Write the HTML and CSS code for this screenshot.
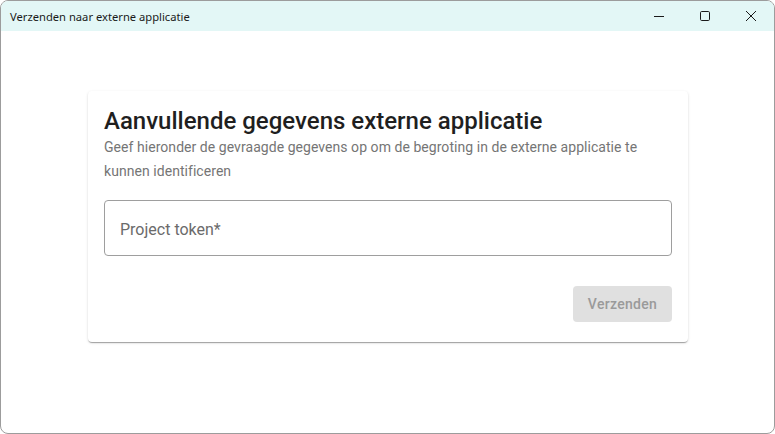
FILE: index.html
```html
<!DOCTYPE html>
<html lang="nl">
<head>
<meta charset="utf-8">
<title>Verzenden naar externe applicatie</title>
<link rel="stylesheet" href="styles.css">
</head>
<body>
<div class="window">
  <div class="titlebar">
    <span class="title">Verzenden naar externe applicatie</span>
    <div class="controls">
      <span class="ctrl"><svg width="10" height="10" viewBox="0 0 10 10"><path d="M0 5.5h10" stroke="#1a1a1a" stroke-width="1"/></svg></span>
      <span class="ctrl"><svg width="10" height="10" viewBox="0 0 10 10"><rect x="0.5" y="0.5" width="9" height="9" rx="1.2" fill="none" stroke="#1a1a1a" stroke-width="1"/></svg></span>
      <span class="ctrl"><svg width="10" height="10" viewBox="0 0 10 10"><path d="M0 0L10 10M10 0L0 10" stroke="#1a1a1a" stroke-width="1"/></svg></span>
    </div>
  </div>
  <div class="content">
    <div class="card">
      <h1 class="card-title">Aanvullende gegevens externe applicatie</h1>
      <p class="card-sub">Geef hieronder de gevraagde gegevens op om de begroting in de externe applicatie te kunnen identificeren</p>
      <div class="field">
        <span class="placeholder">Project token*</span>
      </div>
      <div class="actions">
        <button class="btn" disabled>Verzenden</button>
      </div>
    </div>
  </div>
</div>
</body>
</html>
```
FILE: styles.css
```css
* { box-sizing: border-box; }
html, body { margin: 0; padding: 0; background: #ffffff; }
body { width: 775px; height: 434px; overflow: hidden; }
.window {
  width: 775px;
  height: 434px;
  border: 1px solid #9c9c9c;
  border-radius: 8px;
  overflow: hidden;
  background: #ffffff;
  display: flex;
  flex-direction: column;
}
.titlebar {
  height: 30px;
  background: #e3f7f6;
  display: flex;
  align-items: center;
  justify-content: space-between;
  flex-shrink: 0;
}
.title {
  font-family: "Noto Sans", "Open Sans", sans-serif;
  font-size: 11.2px;
  color: #1a1a1a;
  padding-left: 9px;
}
.controls { display: flex; height: 100%; }
.ctrl {
  width: 46px;
  height: 100%;
  display: flex;
  align-items: center;
  justify-content: center;
}
.content {
  flex: 1;
  display: flex;
  justify-content: center;
  padding-top: 60px;
}
.card {
  width: 600px;
  height: 251px;
  margin-left: 1px;
  background: #ffffff;
  border-radius: 4px;
  box-shadow: 0 2px 1px -1px rgba(0,0,0,0.2), 0 1px 1px 0 rgba(0,0,0,0.14), 0 1px 3px 0 rgba(0,0,0,0.12);
  padding: 16px 16px 20px 16px;
  font-family: Roboto, "Liberation Sans", sans-serif;
}
.card-title {
  margin: 0;
  font-size: 24px;
  font-weight: 500;
  line-height: 28px;
  color: #1f1f1f;
  letter-spacing: 0;
}
.card-sub {
  margin: 0;
  font-size: 14px;
  line-height: 24px;
  color: #757575;
  letter-spacing: 0.05px;
}
.field {
  margin-top: 17px;
  height: 56px;
  border: 1px solid #9e9e9e;
  border-radius: 4px;
  display: flex;
  align-items: center;
  padding-left: 15px;
  padding-top: 2px;
}
.placeholder {
  font-size: 16px;
  color: #6b6b6b;
}
.actions {
  display: flex;
  justify-content: flex-end;
  margin-top: 30px;
}
.btn {
  width: 99px;
  height: 36px;
  border: none;
  border-radius: 4px;
  background: #e0e0e0;
  color: #9a9a9a;
  font-family: Roboto, "Liberation Sans", sans-serif;
  font-size: 14px;
  font-weight: 500;
  letter-spacing: 0.3px;
  padding: 0;
}
```
